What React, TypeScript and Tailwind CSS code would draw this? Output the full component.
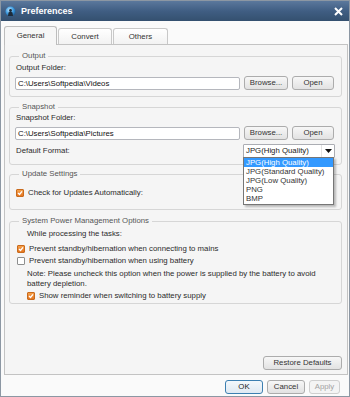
import React from "react";

function Check({ checked }: { checked: boolean }) {
  if (checked) {
    return (
      <span className="inline-flex items-center justify-center w-[8px] h-[8px] rounded-[1px] border border-[#c96a1c] bg-gradient-to-b from-[#f5a04a] to-[#e4761f] shrink-0">
        <svg width="6" height="6" viewBox="0 0 6 6">
          <path d="M1 3 L2.5 4.5 L5 1.3" stroke="#fff" strokeWidth="1.3" fill="none" />
        </svg>
      </span>
    );
  }
  return <span className="inline-block w-[8px] h-[8px] rounded-[1px] border border-[#8e8f8f] bg-white shrink-0" />;
}

function Btn({ children, w, variant }: { children: React.ReactNode; w: string; variant?: "default" | "disabled" }) {
  const base = "h-[14px] flex items-center justify-center rounded-[3px] border leading-none ";
  if (variant === "default")
    return <div className={base + w + " border-[#3c7fb1] bg-gradient-to-b from-[#f3f8fc] to-[#dfe9f2] text-[#222]"}>{children}</div>;
  if (variant === "disabled")
    return <div className={base + w + " border-[#cfcfcf] bg-[#f4f4f4] text-[#a3a3a3]"}>{children}</div>;
  return <div className={base + w + " border-[#acacac] bg-gradient-to-b from-[#f7f7f7] to-[#e2e2e2] text-[#333]"}>{children}</div>;
}

function Legend({ children }: { children: React.ReactNode }) {
  return <legend className="ml-[4px] px-[3px] leading-[10px] text-[#555]">{children}</legend>;
}

export default function App() {
  return (
    <div className="w-[350px] h-[397px] flex flex-col border border-[#8c97a3] bg-[#fafafa] text-[7.8px] text-[#2b2b2b] font-['Liberation_Sans',sans-serif] overflow-hidden">
      {/* Title bar */}
      <div className="h-[20px] shrink-0 flex items-center pl-[4px] pr-[6px] bg-gradient-to-b from-[#5b789c] via-[#405e83] to-[#34506f]">
        <svg width="11" height="11" viewBox="0 0 11 11">
          <defs>
            <radialGradient id="g" cx="40%" cy="35%" r="65%">
              <stop offset="0" stopColor="#bfe6ff" />
              <stop offset="0.6" stopColor="#3d9be0" />
              <stop offset="1" stopColor="#1d5f9a" />
            </radialGradient>
          </defs>
          <circle cx="5.5" cy="5.5" r="5" fill="url(#g)" />
          <path d="M3 10 L3.5 6.5 L5.5 5.5 L7.5 6.5 L8 10 Z" fill="#1d2b3a" />
          <circle cx="5.5" cy="4.5" r="1.4" fill="#1d2b3a" />
        </svg>
        <span className="ml-[5px] text-white font-bold text-[9px] leading-none">Preferences</span>
        <div className="flex-1" />
        <svg width="9" height="9" viewBox="0 0 9 9">
          <path d="M1 1 L8 8 M8 1 L1 8" stroke="#fff" strokeWidth="2" />
        </svg>
      </div>

      {/* Body */}
      <div className="flex-1 flex flex-col pl-[3px] pr-[1px]">
        {/* Tabs */}
        <div className="mt-[5px] h-[18px] flex items-end relative z-10">
          <div className="w-[53px] h-[19px] -mb-px flex items-center justify-center border border-b-0 border-[#bdbdbd] rounded-t-[3px] bg-[#f6f6f6] text-[#333]">
            General
          </div>
          <div className="ml-[1px] w-[54px] h-[16px] flex items-center justify-center border border-b-0 border-[#c8c8c8] rounded-t-[3px] bg-gradient-to-b from-[#ffffff] to-[#f2f2f2] text-[#333]">
            Convert
          </div>
          <div className="ml-[1px] w-[55px] h-[16px] flex items-center justify-center border border-b-0 border-[#c8c8c8] rounded-t-[3px] bg-gradient-to-b from-[#ffffff] to-[#f2f2f2] text-[#333]">
            Others
          </div>
        </div>

        {/* Pane */}
        <div className="w-[344px] h-[331px] flex flex-col border border-[#c3c3c3] bg-[#f5f5f5] pl-[4px] pr-[5px] pt-[6px]">
          {/* Output */}
          <fieldset className="border border-[#d6d6d6] rounded-[3px] pl-[5px] pr-[7px] pb-[6px]">
            <Legend>Output</Legend>
            <div className="mt-[1px] leading-[11px] pl-[1px]">Output Folder:</div>
            <div className="mt-[3px] h-[14px] flex items-end gap-[4px]">
              <div className="flex-1 h-[13px] flex items-center pl-[2px] bg-white border border-[#b5b7bd] rounded-[2px] text-[#111]">
                C:\Users\Softpedia\Videos
              </div>
              <Btn w="w-[44px]">Browse...</Btn>
              <Btn w="w-[42px]">Open</Btn>
            </div>
          </fieldset>

          {/* Snapshot */}
          <fieldset className="mt-[5px] border border-[#d6d6d6] rounded-[3px] pl-[5px] pr-[7px] pb-[6px]">
            <Legend>Snapshot</Legend>
            <div className="leading-[11px] pl-[1px]">Snapshot Folder:</div>
            <div className="mt-[3px] h-[14px] flex items-end gap-[4px]">
              <div className="flex-1 h-[13px] flex items-center pl-[2px] bg-white border border-[#b5b7bd] rounded-[2px] text-[#111]">
                C:\Users\Softpedia\Pictures
              </div>
              <Btn w="w-[44px]">Browse...</Btn>
              <Btn w="w-[42px]">Open</Btn>
            </div>
            <div className="mt-[4px] h-[14px] flex items-center justify-between">
              <span className="pl-[1px]">Default Format:</span>
              <div className="relative w-[92px] h-[14px] -mr-[1px] flex items-center bg-white border border-[#abadb3] rounded-[1px]">
                <span className="flex-1 pl-[2px] text-[#222]">JPG(High Quality)</span>
                <div className="w-[13px] h-full flex items-center justify-center border-l border-[#e2e2e2]">
                  <svg width="7" height="4" viewBox="0 0 7 4">
                    <path d="M0 0 L7 0 L3.5 4 Z" fill="#111" />
                  </svg>
                </div>
                {/* Dropdown list */}
                <div className="absolute left-[-1px] top-[12px] w-[91px] border border-[#767676] bg-white shadow-[2px_2px_2px_rgba(0,0,0,0.25)] z-20">
                  <div className="h-[9px] leading-[9px] pl-[2px] bg-[#3399ff] text-white">JPG(High Quality)</div>
                  <div className="h-[9px] leading-[9px] pl-[2px] text-[#333]">JPG(Standard Quality)</div>
                  <div className="h-[9px] leading-[9px] pl-[2px] text-[#333]">JPG(Low Quality)</div>
                  <div className="h-[9px] leading-[9px] pl-[2px] text-[#333]">PNG</div>
                  <div className="h-[9px] leading-[9px] pl-[2px] text-[#333] mb-[1px]">BMP</div>
                </div>
              </div>
            </div>
          </fieldset>

          {/* Update Settings */}
          <fieldset className="mt-[4px] border border-[#d6d6d6] rounded-[3px] pl-[5px] pr-[7px] pb-[10px]">
            <Legend>Update Settings</Legend>
            <div className="mt-[8px] h-[12px] flex items-center gap-[4px] pl-[1px]">
              <Check checked />
              <span>Check for Updates Automatically:</span>
            </div>
          </fieldset>

          {/* System Power Management */}
          <fieldset className="mt-[6px] border border-[#d6d6d6] rounded-[3px] pl-[5px] pr-[7px] pb-[1px]">
            <Legend>System Power Management Options</Legend>
            <div className="mt-[2px] leading-[11px] pl-[12px]">While processing the tasks:</div>
            <div className="mt-[4px] h-[12px] flex items-center gap-[4px] pl-[2px]">
              <Check checked />
              <span>Prevent standby/hibernation when connecting to mains</span>
            </div>
            <div className="h-[12px] flex items-center gap-[4px] pl-[2px]">
              <Check checked={false} />
              <span>Prevent standby/hibernation when using battery</span>
            </div>
            <div className="mt-[2px] leading-[10px] pl-[12px] pr-[4px]">
              Note: Please uncheck this option when the power is supplied by the battery to avoid battery depletion.
            </div>
            <div className="mt-[1px] h-[12px] flex items-center gap-[4px] pl-[12px]">
              <Check checked />
              <span>Show reminder when switching to battery supply</span>
            </div>
          </fieldset>

          <div className="flex-1" />
          <div className="flex justify-end pb-[4px]">
            <Btn w="w-[79px]">Restore Defaults</Btn>
          </div>
        </div>

        {/* Bottom buttons */}
        <div className="mt-[5px] flex justify-end gap-[4px] pr-[8px]">
          <Btn w="w-[38px]" variant="default">OK</Btn>
          <Btn w="w-[38px]">Cancel</Btn>
          <Btn w="w-[31px]" variant="disabled">Apply</Btn>
        </div>
      </div>
    </div>
  );
}
